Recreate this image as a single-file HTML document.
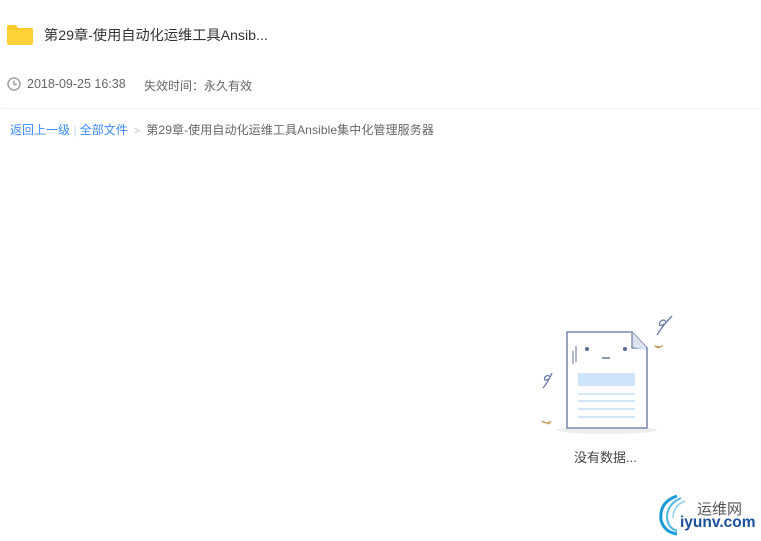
<!DOCTYPE html>
<html><head><meta charset="utf-8"><style>
html,body{margin:0;padding:0;width:761px;height:541px;background:#fff;overflow:hidden;font-family:"Liberation Sans","Noto Sans CJK SC",sans-serif;position:relative}
.a{position:absolute;white-space:nowrap}
</style></head><body>
<div class="a" style="left:7px;top:25px;width:26px;height:20px;">
<svg width="26" height="20"><path d="M0 2 Q0 0 2 0 H9 L11 3 H24 Q26 3 26 5 V18 Q26 20 24 20 H2 Q0 20 0 18Z" fill="#fdc92b"/><rect x="0" y="5" width="26" height="15" rx="1.5" fill="#ffd23a"/></svg></div>
<div class="a" style="left:44px;top:25px;font-size:14.2px;color:#333;">第29章-使用自动化运维工具Ansib...</div>
<div class="a" style="left:7px;top:77px;"><svg width="14" height="14"><circle cx="7" cy="7" r="6" fill="none" stroke="#a0a0a0" stroke-width="1.5"/><path d="M7 3.5V7.5H10" fill="none" stroke="#a0a0a0" stroke-width="1.5"/></svg></div>
<div class="a" style="left:27px;top:77px;font-size:12.5px;color:#666;">2018-09-25 16:38</div>
<div class="a" style="left:144px;top:77px;font-size:12px;color:#666;">失效时间：永久有效</div>
<div class="a" style="left:2px;top:108px;width:759px;height:1px;background:#f2f2f2"></div>
<div class="a" style="left:10px;top:121px;font-size:12px;color:#3b8cff;">返回上一级 <span style="color:#c0d8f8">|</span> 全部文件 <span style="color:#bbb;font-size:10px;margin:0 3px">&gt;</span> <span style="color:#666;letter-spacing:0.1px">第29章-使用自动化运维工具Ansible集中化管理服务器</span></div>
<svg class="a" style="left:530px;top:310px" width="160" height="130">
<ellipse cx="77" cy="120" rx="50" ry="4" fill="#eeeeee"/>
<path d="M37 23 Q36 22 38 22 L102 22 L117 38 L117 118 L37 118 Z" fill="#fff" stroke="#7d8ab0" stroke-width="1.6"/>
<path d="M102 22 L102 38 L117 38" fill="#dfe3ee" stroke="#7d8ab0" stroke-width="1.4"/>
<path d="M103 37 L116 37 L116 40Z" fill="#cfe6fa"/>
<line x1="43" y1="41" x2="43" y2="54" stroke="#7d8ab0" stroke-width="1.2"/>
<line x1="46" y1="36" x2="46" y2="52" stroke="#7d8ab0" stroke-width="1.2"/>
<circle cx="57" cy="39" r="2" fill="#5a6a99"/><circle cx="95" cy="39" r="2" fill="#5a6a99"/>
<line x1="72" y1="48" x2="80" y2="48" stroke="#5a6a99" stroke-width="1.4"/>
<rect x="48" y="63" width="57" height="13" fill="#cde4f9"/>
<g stroke="#b7d8f5" stroke-width="1.2"><line x1="48" y1="84" x2="105" y2="84"/><line x1="48" y1="91" x2="105" y2="91"/><line x1="48" y1="99" x2="105" y2="99"/><line x1="48" y1="107" x2="105" y2="107"/></g>
<path d="M127 25 Q133 15 142 6 M134 14 Q128 18 130 12 Q134 8 136 12" fill="none" stroke="#6a7aa8" stroke-width="1.3"/>
<path d="M13 78 Q18 72 22 63 M19 69 Q13 72 15 67 Q18 64 20 67" fill="none" stroke="#6a7aa8" stroke-width="1.3"/>
<path d="M125 36 Q129 40 133 35 L131 37Z" fill="#c79c55" stroke="#c79c55"/>
<path d="M12 111 Q16 115 21 111 L19 114Z" fill="#c79c55" stroke="#c79c55"/>
</svg>
<div class="a" style="left:574px;top:447px;font-size:13px;color:#444;">没有数据...</div>
<svg class="a" style="left:655px;top:492px" width="40" height="45">
<path d="M22 4 Q4 10 6 28 Q9 40 22 42" fill="none" stroke="#1a9bd8" stroke-width="3"/>
<path d="M26 6 Q12 12 12 26 Q13 36 22 39" fill="none" stroke="#4fb8e8" stroke-width="2"/>
<path d="M30 9 Q18 14 18 26" fill="none" stroke="#8fd0f0" stroke-width="1.5"/>
</svg>
<div class="a" style="left:697px;top:498px;font-size:15px;color:#555;">运维网</div>
<div class="a" style="left:680px;top:514px;font-size:15.5px;font-weight:bold;color:#1a4f9a;">iyunv.com</div>
</body></html>
